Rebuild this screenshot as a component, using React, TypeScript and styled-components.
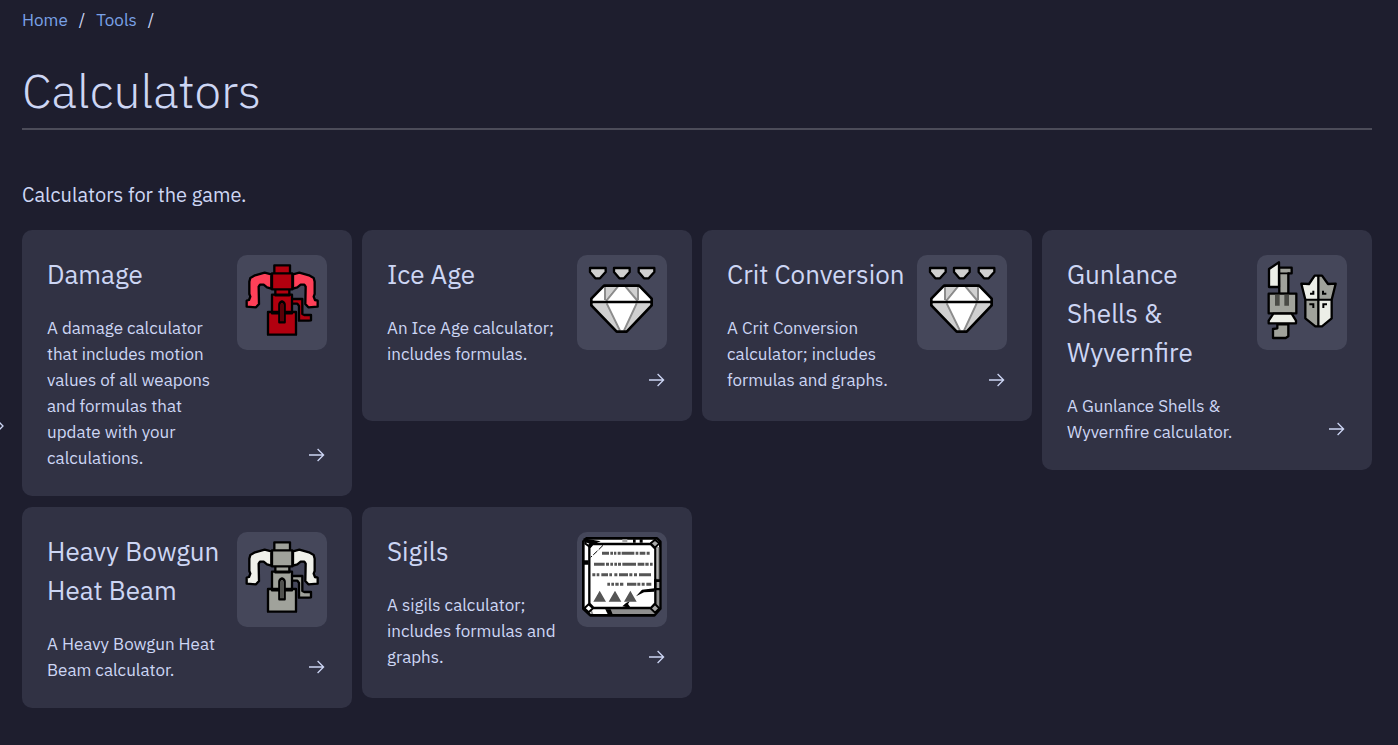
import React from "react";
import styled, { createGlobalStyle } from "styled-components";

const Global = createGlobalStyle`
  *, *::before, *::after { box-sizing: border-box; }
  body {
    margin: 0;
    background: #1e1e2e;
    color: #cdd6f4;
    font-family: "IBM Plex Sans", "Noto Sans", "Open Sans", sans-serif;
    font-size: 17px;
    line-height: 26px;
  }
`;

const Page = styled.main`
  padding: 7px 26px 36px 22px;
`;

const Crumbs = styled.nav`
  ol {
    display: flex;
    gap: 11px;
    margin: 0;
    padding: 0;
    list-style: none;
  }
  li {
    display: flex;
    gap: 11px;
  }
  li::after { content: "/"; }
`;

const CrumbLink = styled.a`
  color: #7aa2e8;
  text-decoration: none;
`;

const Title = styled.h1`
  margin: 20px 0 0;
  padding-bottom: 1px;
  border-bottom: 2px solid #4c4c59;
  font-size: 48px;
  font-weight: 300;
  line-height: 74px;
`;

const Intro = styled.p`
  margin: 50px 0 20px;
  font-size: 20px;
  line-height: 30px;
`;

const CardGrid = styled.section`
  display: grid;
  grid-template-columns: repeat(4, minmax(0, 1fr));
  align-items: start;
  gap: 11px 10px;
`;

const Card = styled.a`
  display: flex;
  gap: 10px;
  padding: 25px;
  border-radius: 10px;
  background: #313244;
  color: inherit;
  text-decoration: none;
`;

const CardText = styled.div`
  flex: 1;
  min-width: 0;
`;

const CardTitle = styled.h2`
  margin: 0 0 21px;
  font-size: 26px;
  font-weight: 400;
  line-height: 39px;
`;

const CardCopy = styled.p`
  margin: 0;
`;

const CardSide = styled.div`
  display: flex;
  flex-direction: column;
  justify-content: space-between;
  align-items: flex-end;
`;

const Tile = styled.svg`
  display: block;
  width: 90px;
  height: 95px;
  border-radius: 10px;
  background: #45475a;
`;

const ArrowBox = styled.span`
  display: flex;
  align-items: center;
  height: 46px;
  padding-top: 14px;
`;

const DrawerButton = styled.button`
  position: fixed;
  left: 0;
  top: 416px;
  width: 6px;
  height: 20px;
  padding: 0;
  border: 0;
  background: none;
  color: #cdd6f4;
  svg { display: block; }
`;

function Arrow() {
  return (
    <ArrowBox>
      <svg width="20" height="16" viewBox="0 0 20 16" fill="none" stroke="#cdd6f4" strokeWidth="1.3" aria-hidden="true">
        <path d="M2 8H16.6M10.6 2L16.6 8L10.6 14" />
      </svg>
    </ArrowBox>
  );
}

function BowgunIcon({ body, limb }: { body: string; limb: string }) {
  return (
    <Tile viewBox="15 15 270 285" stroke="#000" strokeWidth="7" strokeLinejoin="round" aria-hidden="true">
      <path fill={limb} d="M118 73L98 68L69 76L55 84L52 95V132L55 140L51 150L44 152V170L72 172L81 162L80 110L84 104L95 104L105 112L118 116Z" />
      <path fill={limb} d="M183 73L202 68L231 76L245 84L248 95V132L245 140L249 150L257 152V170L229 172L220 162L221 110L217 104L206 104L196 112L183 116Z" />
      <path fill={body} d="M127 46H174V70H127ZM130 118H172V136H130ZM180 147H211V192L217 195H237V211L230 212H201V168L196 161H180ZM120 134H180V190H120ZM120 70H181V118H120ZM108 186H192V254H108Z" />
      <path fill={body} d="M142 217V164Q142 157 150 154Q158 157 158 164V217Z" />
      <path fill="none" d="M150 160V216" strokeWidth="3" />
    </Tile>
  );
}

function GemIcon() {
  return (
    <Tile viewBox="15 15 270 285" strokeLinejoin="round" aria-hidden="true">
      <g fill="#d0d0d0" stroke="#000" strokeWidth="7">
        <path d="M54 54H101V66L84 85H70L54 66ZM126 54H173V66L156 85H142L126 66ZM200 54H247V66L230 85H216L200 66Z" />
      </g>
      <path fill="#fff" d="M58 146L96 107H201L239 146V166L164 245H134L58 166Z" />
      <path fill="#d0d0d0" d="M98 107H136L101 148ZM160 107H198V150ZM58 160H104L144 244H134L58 166ZM239 160H194L156 244H164L239 166Z" />
      <path fill="none" stroke="#8c8c8c" strokeWidth="6" d="M99 109V150M138 109L102 153M160 109L197 153M198 109V150M104 160L144 242M194 160L156 242" />
      <path fill="none" stroke="#000" strokeWidth="8" d="M58 146L96 107H201L239 146V166L164 245H134L58 166Z" />
      <path fill="none" stroke="#000" strokeWidth="7" d="M58 156H239" />
    </Tile>
  );
}

function GunlanceIcon() {
  return (
    <Tile viewBox="15 15 270 285" stroke="#000" strokeWidth="7" strokeLinejoin="round" aria-hidden="true">
      <path fill="#a0a29b" d="M81 53H119V70H109V132H82ZM63 237L76 235V223H109V259L101 264H63Z" />
      <path fill="none" d="M84 70H112" strokeWidth="5" />
      <path fill="#eceee7" d="M81 37V111H51V57Z" />
      <path fill="#a0a29b" d="M50 131H133V190H50Z" />
      <path fill="#4a4b46" stroke="none" d="M69 134H83V167H69ZM97 134H111V167H97Z" />
      <path fill="#eceee7" d="M64 191H119L132 212V220H50V212Z" />
      <path fill="#eceee7" stroke="none" d="M198 78H188L171 102L148 101L160 149H239V205L210 229H198Z" />
      <path fill="#a0a29b" stroke="none" d="M198 78L210 77L228 102L251 101L239 149H198ZM160 149H198V229H190L160 205Z" />
      <path fill="none" d="M188 77H210L228 102L251 101L239 149V205L210 229H190L160 205V149L148 101L171 102ZM199 78V229" />
      <path fill="none" strokeWidth="6" d="M160 149H239" />
      <path fill="none" strokeWidth="6" strokeLinejoin="miter" d="M174 131H184V122M223 131H213V122M172 163H184V174M225 163H214V174" />
    </Tile>
  );
}

function SigilIcon() {
  return (
    <Tile viewBox="15 15 270 285" strokeLinejoin="round" aria-hidden="true">
      <path fill="#fff" stroke="#000" strokeWidth="8" d="M43 34H255L265 44V245L247 265H55L34 245V43Z" />
      <path fill="#8f8f8f" d="M250 60H262V242L246 261H58L52 244H250Z" />
      <path fill="#fff" d="M58 246H100L106 261H64ZM252 62H256V155H252Z" />
      <path fill="#fff" stroke="#000" strokeWidth="7" d="M62 51H236L250 65V229L237 243H65L52 230V62Z" />
      <path fill="#000" d="M34 34L86 43L62 53L52 65ZM36 100H50V113H36ZM183 37H191V47H183ZM203 37H212V47H203ZM246 157H266V190H246ZM100 247H116L122 262H108Z" />
      <path fill="#aaa" d="M151 37H166V46H151ZM254 165H262V183H254Z" />
      <path fill="#aaa" stroke="#000" strokeWidth="6" d="M249 38L262 49L249 62L236 49ZM249 231L262 244L249 257L236 244Z" />
      <path fill="#fff" stroke="#000" strokeWidth="6" d="M50 232L63 244L50 256L37 244ZM40 42L56 48L50 57L40 50Z" />
      <path fill="#000" d="M192 208L210 188L247 184V194L216 196ZM151 238L162 228L174 222L168 231L175 241H165Z" />
      <path fill="none" stroke="#000" strokeWidth="3" d="M93 55L76 72L56 91" strokeDasharray="18 5" />
      <g fill="none" stroke="#555" strokeWidth="9">
        <path d="M90 79H111M115 79H123M126 79H133M137 79H146M149 79H187M191 79H199M203 79H220M224 79H233" />
        <path d="M66 112H98M102 112H111M115 112H123M127 112H135M138 112H147M151 112H192M197 112H217M220 112H230M234 112H242" />
        <path d="M61 143H70M74 143H82M88 143H108M112 143H120M127 143H136M141 143H168M172 143H181M186 143H195M201 143H237" />
        <path d="M106 172H114M118 172H126M130 172H140M144 172H154M165 172H193M196 172H205M209 172H218M223 172H238" />
      </g>
      <path fill="#555" d="M64 224L83 191L102 224ZM110 224L129 191L148 224ZM156 224L175 191L194 224Z" />
    </Tile>
  );
}

const cards: { title: string; copy: string; icon: React.ReactNode }[] = [
  {
    title: "Damage",
    copy: "A damage calculator that includes motion values of all weapons and formulas that update with your calculations.",
    icon: <BowgunIcon body="#b2000f" limb="#ff4058" />,
  },
  { title: "Ice Age", copy: "An Ice Age calculator; includes formulas.", icon: <GemIcon /> },
  {
    title: "Crit Conversion",
    copy: "A Crit Conversion calculator; includes formulas and graphs.",
    icon: <GemIcon />,
  },
  {
    title: "Gunlance Shells & Wyvernfire",
    copy: "A Gunlance Shells & Wyvernfire calculator.",
    icon: <GunlanceIcon />,
  },
  {
    title: "Heavy Bowgun Heat Beam",
    copy: "A Heavy Bowgun Heat Beam calculator.",
    icon: <BowgunIcon body="#a0a29b" limb="#f0f1ea" />,
  },
  {
    title: "Sigils",
    copy: "A sigils calculator; includes formulas and graphs.",
    icon: <SigilIcon />,
  },
];

export default function App() {
  return (
    <>
      <Global />
      <DrawerButton type="button" aria-label="Open sidebar">
        <svg width="6" height="20" viewBox="0 0 6 20" fill="none" stroke="currentColor" strokeWidth="1.3" aria-hidden="true">
          <path d="M-1 6L3 10L-1 14" />
        </svg>
      </DrawerButton>
      <Page>
        <Crumbs aria-label="Breadcrumb">
          <ol>
            <li><CrumbLink href="#home">Home</CrumbLink></li>
            <li><CrumbLink href="#tools">Tools</CrumbLink></li>
          </ol>
        </Crumbs>
        <Title>Calculators</Title>
        <Intro>Calculators for the game.</Intro>
        <CardGrid>
          {cards.map((card) => (
            <Card key={card.title} href="#calculator">
              <CardText>
                <CardTitle>{card.title}</CardTitle>
                <CardCopy>{card.copy}</CardCopy>
              </CardText>
              <CardSide>
                {card.icon}
                <Arrow />
              </CardSide>
            </Card>
          ))}
        </CardGrid>
      </Page>
    </>
  );
}
